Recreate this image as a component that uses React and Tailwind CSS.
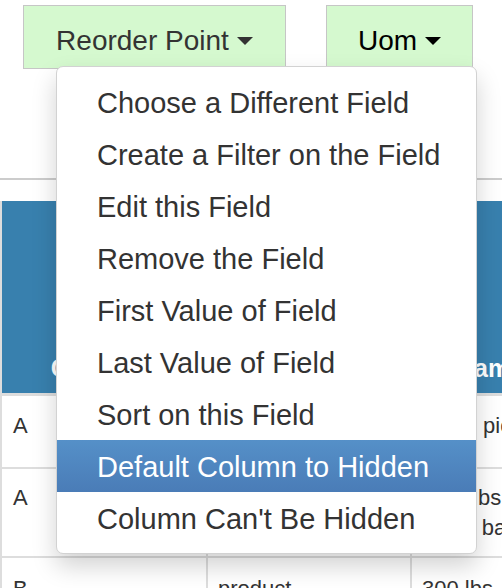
import React from 'react';

const menuItems = [
  'Choose a Different Field',
  'Create a Filter on the Field',
  'Edit this Field',
  'Remove the Field',
  'First Value of Field',
  'Last Value of Field',
  'Sort on this Field',
  'Default Column to Hidden',
  "Column Can't Be Hidden",
];

function Caret() {
  return (
    <span className="inline-block h-0 w-0 border-x-[8px] border-t-[8px] border-x-transparent border-t-current" />
  );
}

function FieldButton({ label, width, dark }) {
  return (
    <button
      className={`flex h-[64px] ${width} items-center justify-center gap-[8px] border border-[#c6c6c6] bg-[#d5f9cf] pt-[7px] text-[28px] ${dark ? 'text-black' : 'text-[#333]'}`}
    >
      <span>{label}</span>
      <Caret />
    </button>
  );
}

export default function App() {
  return (
    <div className="relative h-[588px] w-[502px] overflow-hidden bg-white font-['Liberation_Sans',Arial,sans-serif] text-[#333]">
      {/* botones de campo */}
      <div className="flex h-[178px] items-start gap-[40px] pl-[23px] pt-[5px]">
        <FieldButton label="Reorder Point" width="w-[263px]" />
        <FieldButton label="Uom" width="w-[147px]" dark />
      </div>
      <div className="h-[2px] bg-[#cccccc]" />

      {/* tabla */}
      <div className="pt-[21px]">
        <div className="grid w-[582px] grid-cols-[206px_204px_172px] border-l-2 border-[#dddddd] text-[22px] leading-[30px]">
          <div className="flex h-[192px] items-end justify-center bg-[#3880ae] pb-[10px] text-[25px] font-bold text-white">Category</div>
          <div className="flex h-[192px] items-end justify-center bg-[#3880ae] pb-[10px] text-[25px] font-bold text-white">Type</div>
          <div className="flex h-[192px] items-end justify-start bg-[#3880ae] pb-[10px] pl-[44px] text-[25px] font-bold text-white">Name</div>

          <div className="col-span-3 h-[3px] bg-[#dddddd]" />

          <div className="h-[73px] border-r-2 border-b-2 border-[#dddddd] px-[11px] pt-[15px]">A</div>
          <div className="h-[73px] border-r-2 border-b-2 border-[#dddddd] px-[10px] pt-[15px]">supply</div>
          <div className="h-[73px] border-b-2 border-[#dddddd] pl-[16px] pt-[15px] whitespace-nowrap">1200 pieces</div>

          <div className="h-[89px] border-r-2 border-b-2 border-[#dddddd] px-[11px] pt-[14px]">A</div>
          <div className="h-[89px] border-r-2 border-b-2 border-[#dddddd] px-[10px] pt-[14px]">material</div>
          <div className="h-[89px] border-b-2 border-[#dddddd] pl-[16px] pt-[14px] whitespace-nowrap">
            <div className="-ml-[10px]">1000 lbs</div>
            <div>each bag</div>
          </div>

          <div className="h-[60px] border-r-2 border-[#dddddd] px-[11px] pt-[16px]">B</div>
          <div className="h-[60px] border-r-2 border-[#dddddd] px-[10px] pt-[16px]">product</div>
          <div className="h-[60px] px-[10px] pt-[16px]">300 lbs</div>
        </div>
      </div>

      {/* menú desplegable */}
      <div className="absolute left-[56px] top-[66px] w-[421px] rounded-[7px] border border-[#d2d2d2] bg-white py-[9px] shadow-[0_12px_24px_rgba(0,0,0,0.18)]">
        {menuItems.map((item, i) => (
          <div
            key={item}
            className={`flex h-[52px] items-center whitespace-nowrap px-[40px] pt-[4px] text-[29px] ${
              i === 7 ? 'bg-linear-to-b from-[#5590c8] to-[#4a7cb7] text-white' : 'text-[#333]'
            }`}
          >
            {item}
          </div>
        ))}
      </div>
    </div>
  );
}
